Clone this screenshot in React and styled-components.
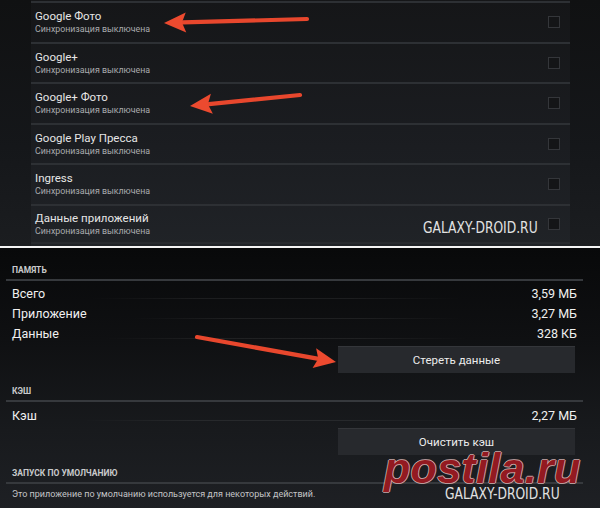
import React from 'react'
import styled, { createGlobalStyle } from 'styled-components'

const GlobalStyle = createGlobalStyle`
    html, body {
        margin: 0;
        padding: 0;
        background: #000;
    }
    * {
        box-sizing: border-box;
    }
`

const Page = styled.div`
    position: relative;
    width: 600px;
    height: 508px;
    overflow: hidden;
    font-family: Roboto, "Noto Sans", "Liberation Sans", sans-serif;
    display: flex;
    flex-direction: column;
`

// ---------- top screenshot: accounts sync list ----------

const TopPanel = styled.div`
    display: flex;
    height: 246px;
    background: linear-gradient(180deg, #151618 0%, #1b1d21 60%, #202327 100%);
`

const Gutter = styled.div`
    width: ${({ w }) => w}px;
    flex-shrink: 0;
    background: linear-gradient(180deg, #101112 0%, #15171a 60%, #1b1d20 100%);
`

const List = styled.div`
    flex: 1;
    padding-top: 1px;
`

const SyncRow = styled.div`
    height: 40.5px;
    display: flex;
    align-items: center;
    padding: 0 10px 0 4px;
    border-top: 2px solid #2d3034;
    &:last-child {
        border-bottom: 2px solid #272a2e;
    }
`

const SyncText = styled.div`
    flex: 1;
    display: flex;
    flex-direction: column;
`

const SyncTitle = styled.div`
    font-size: 11.5px;
    line-height: 14px;
    color: #e6e6e6;
`

const SyncSub = styled.div`
    font-size: 8.8px;
    line-height: 11px;
    margin-top: 1px;
    color: #a9abae;
`

const Check = styled.div`
    width: 12px;
    height: 12px;
    border: 1.5px solid #34363a;
    background: #141517;
`

const Divider = styled.div`
    height: 2px;
    background: #f4f4f4;
`

// ---------- bottom screenshot: storage ----------

const BottomPanel = styled.div`
    flex: 1;
    display: flex;
    flex-direction: column;
    padding: 0 17px 0 6px;
    background: linear-gradient(180deg, #08090a 0%, #0f1012 35%, #181a1d 70%, #1e2024 100%);
`

const SectionTitle = styled.div`
    margin-top: ${({ first }) => (first ? 16 : 12)}px;
    padding-left: 6px;
    font-size: 8.5px;
    line-height: 12px;
    font-weight: 700;
    color: #c9cacc;
`

const SectionLine = styled.div`
    margin-top: 3px;
    height: 2px;
    background: #36393d;
`

const Rows = styled.div`
    margin-top: ${({ gap }) => gap}px;
    display: flex;
    flex-direction: column;
`

const InfoRow = styled.div`
    height: 20px;
    display: flex;
    align-items: center;
    padding: 0 6px;
    font-size: 12.5px;
    color: #f0f0f0;
`

const Leader = styled.div`
    flex: 1;
    align-self: flex-end;
    height: 1px;
    margin: 0 70px 4px 45px;
    background: linear-gradient(90deg, transparent, rgba(255, 255, 255, 0.07) 30%, rgba(255, 255, 255, 0.07) 70%, transparent);
`

const Value = styled.div`
    color: #f0f0f0;
`

const Button = styled.div`
    align-self: flex-end;
    margin-top: 3px;
    margin-right: 8px;
    width: 237px;
    height: 27px;
    display: flex;
    align-items: center;
    justify-content: center;
    font-size: 11.5px;
    color: #ececec;
    background: #27292d;
    border-top: 1px solid #34363a;
`

const Description = styled.div`
    margin-top: 4px;
    padding-left: 6px;
    font-size: 9px;
    line-height: 12px;
    color: #c4c5c7;
`

// ---------- overlays (watermarks, arrows) ----------

const SiteMark = styled.div`
    position: absolute;
    left: ${({ x }) => x}px;
    top: ${({ y }) => y}px;
    font-family: "DejaVu Sans", sans-serif;
    font-size: 15px;
    line-height: 16px;
    color: #e2e2e2;
    white-space: nowrap;
    transform: scaleX(0.82);
    transform-origin: left center;
`

const Postila = styled.div`
    position: absolute;
    left: 384px;
    top: 447px;
    font-family: "Liberation Sans", Arial, sans-serif;
    font-style: italic;
    font-weight: 700;
    font-size: 43px;
    line-height: 1;
    color: #931a21;
    letter-spacing: 0.3px;
    text-shadow: 1px 0 0 rgba(240, 200, 200, 0.7), -1px 0 0 rgba(240, 200, 200, 0.7),
        0 1px 0 rgba(240, 200, 200, 0.7), 0 -1px 0 rgba(240, 200, 200, 0.7);
    white-space: nowrap;
`

const Overlay = styled.svg`
    position: absolute;
    left: 0;
    top: 0;
    pointer-events: none;
`

const Arrow = ({ from, to }) => {
    const [x1, y1] = from
    const [x2, y2] = to
    const dx = x2 - x1
    const dy = y2 - y1
    const len = Math.hypot(dx, dy)
    const ux = dx / len
    const uy = dy / len
    const head = 22
    const half = 10
    const bx = x2 - ux * head
    const by = y2 - uy * head
    const pts = [
        [x2, y2],
        [bx - uy * half, by + ux * half],
        [bx + 4 * ux, by + 4 * uy],
        [bx + uy * half, by - ux * half],
    ]
    return (
        <g>
            <line x1={x1} y1={y1} x2={bx + 3 * ux} y2={by + 3 * uy} stroke="#e8472d" strokeWidth="4.2" strokeLinecap="round" />
            <polygon points={pts.map((p) => p.join(',')).join(' ')} fill="#ec4a2f" />
        </g>
    )
}

const accounts = [
    'Google Фото',
    'Google+',
    'Google+ Фото',
    'Google Play Пресса',
    'Ingress',
    'Данные приложений',
]

const memory = [
    ['Всего', '3,59 МБ'],
    ['Приложение', '3,27 МБ'],
    ['Данные', '328 КБ'],
]

export default function App() {
    return (
        <Page>
            <GlobalStyle />
            <TopPanel>
                <Gutter w={31} />
                <List>
                    {accounts.map((name) => (
                        <SyncRow key={name}>
                            <SyncText>
                                <SyncTitle>{name}</SyncTitle>
                                <SyncSub>Синхронизация выключена</SyncSub>
                            </SyncText>
                            <Check />
                        </SyncRow>
                    ))}
                </List>
                <Gutter w={30} />
            </TopPanel>
            <Divider />
            <BottomPanel>
                <SectionTitle first>ПАМЯТЬ</SectionTitle>
                <SectionLine />
                <Rows gap={2}>
                    {memory.map(([label, value]) => (
                        <InfoRow key={label}>
                            {label}
                            <Leader />
                            <Value>{value}</Value>
                        </InfoRow>
                    ))}
                </Rows>
                <Button>Стереть данные</Button>
                <SectionTitle>КЭШ</SectionTitle>
                <SectionLine />
                <Rows gap={3}>
                    <InfoRow>
                        Кэш
                        <Leader />
                        <Value>2,27 МБ</Value>
                    </InfoRow>
                </Rows>
                <Button>Очистить кэш</Button>
                <SectionTitle>ЗАПУСК ПО УМОЛЧАНИЮ</SectionTitle>
                <SectionLine />
                <Description>Это приложение по умолчанию используется для некоторых действий.</Description>
            </BottomPanel>

            <SiteMark x={423} y={220}>GALAXY-DROID.RU</SiteMark>
            <Postila>postila.ru</Postila>
            <SiteMark x={445} y={486}>GALAXY-DROID.RU</SiteMark>

            <Overlay width="600" height="508" viewBox="0 0 600 508">
                <Arrow from={[307, 19]} to={[164, 23]} />
                <Arrow from={[300, 95]} to={[190, 106]} />
                <Arrow from={[197, 337]} to={[336, 362]} />
            </Overlay>
        </Page>
    )
}
